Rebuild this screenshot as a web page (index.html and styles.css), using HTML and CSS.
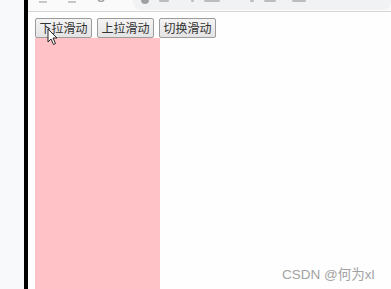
FILE: index.html
```html
<!DOCTYPE html>
<html>
<head>
<meta charset="utf-8">
<link rel="stylesheet" href="styles.css">
</head>
<body>
<div class="frame">
  <div class="side"></div>
  <div class="edge"></div>
  <div class="main">
    <div class="toolbar">
      <svg class="nav" width="10" height="6" viewBox="0 0 10 6"><path d="M1 2 H9" stroke="#a6a6a6" stroke-width="1.2"/></svg>
      <svg class="nav" width="10" height="6" viewBox="0 0 10 6"><path d="M1 2 H9" stroke="#a6a6a6" stroke-width="1.2"/></svg>
      <svg class="nav" width="10" height="6" viewBox="0 0 10 6"><path d="M2 0 A4 4 0 0 0 8 0" fill="none" stroke="#9a9a9a" stroke-width="1.4"/></svg>
      <div class="omnibox">
        <span class="dot"></span>
        <span class="blur w1"></span>
        <span class="blur w2"></span>
        <span class="blur w3"></span>
        <span class="blur w4"></span>
        <span class="blur w5"></span>
        <span class="blur w6"></span>
      </div>
    </div>
    <div class="page">
      <div class="buttons">
        <button class="btn">下拉滑动</button>
        <button class="btn">上拉滑动</button>
        <button class="btn">切换滑动</button>
      </div>
      <div class="box"></div>
    </div>
    <svg class="cursor" width="12" height="18" viewBox="0 0 12 18">
      <path d="M1 1 L1 14 L4 11 L6.5 16.5 L8.5 15.5 L6 10 L10 10 Z" fill="#fff" stroke="#222" stroke-width="1"/>
    </svg>
    <div class="watermark">CSDN @何为xl</div>
  </div>
</div>
</body>
</html>
```
FILE: styles.css
```css
html, body {
  margin: 0;
  padding: 0;
  width: 391px;
  height: 289px;
  overflow: hidden;
  background: #fdfefd;
  font-family: "Liberation Sans", "Noto Sans CJK SC", sans-serif;
}
.frame {
  display: flex;
  height: 289px;
}
.side {
  width: 24px;
  background: #f8f9fb;
}
.edge {
  width: 4px;
  background: #000;
}
.main {
  flex: 1;
  position: relative;
  display: flex;
  flex-direction: column;
  background: #fdfefd;
}
.toolbar {
  height: 11px;
  border-bottom: 1px solid #d6d6d6;
  background: #fafafa;
  display: flex;
  align-items: flex-start;
  overflow: hidden;
  padding-left: 10px;
  gap: 19px;
}
.nav {
  flex: none;
}
.omnibox {
  margin-left: 8px;
  flex: 1;
  height: 10px;
  background: #f0f2f3;
  border-radius: 0 0 8px 8px;
  display: flex;
  gap: 10px;
  padding-left: 8px;
  align-items: flex-start;
}
.dot {
  width: 8px;
  height: 4px;
  border-radius: 0 0 4px 4px;
  background: #a0a0a0;
}
.blur {
  height: 2px;
  background: #bdbdbd;
  border-radius: 1px;
}
.w1 { width: 10px; }
.w2 { width: 3px; margin-left: 12px; }
.w3 { width: 16px; }
.w4 { width: 4px; margin-left: 20px; }
.w5 { width: 12px; }
.w6 { width: 14px; margin-left: 6px; }
.page {
  flex: 1;
  display: flex;
  flex-direction: column;
  padding: 6px 0 0 7px;
}
.buttons {
  display: flex;
  gap: 5px;
}
.btn {
  height: 20px;
  width: 57px;
  padding: 0;
  font-family: "Noto Sans CJK SC", sans-serif;
  font-size: 12px;
  color: #333;
  background: linear-gradient(#f4f4f4, #e4e4e4);
  border: 1px solid #9c9c9c;
  border-radius: 2px;
  line-height: 18px;
}
.box {
  width: 125px;
  flex: 1;
  background: #ffc2c6;
}
.cursor {
  position: absolute;
  left: 19px;
  top: 28px;
}
.watermark {
  position: absolute;
  left: 254px;
  top: 263px;
  font-size: 13.5px;
  color: #a3a3a3;
  font-family: "Liberation Sans", "Noto Sans CJK SC", sans-serif;
}
```
